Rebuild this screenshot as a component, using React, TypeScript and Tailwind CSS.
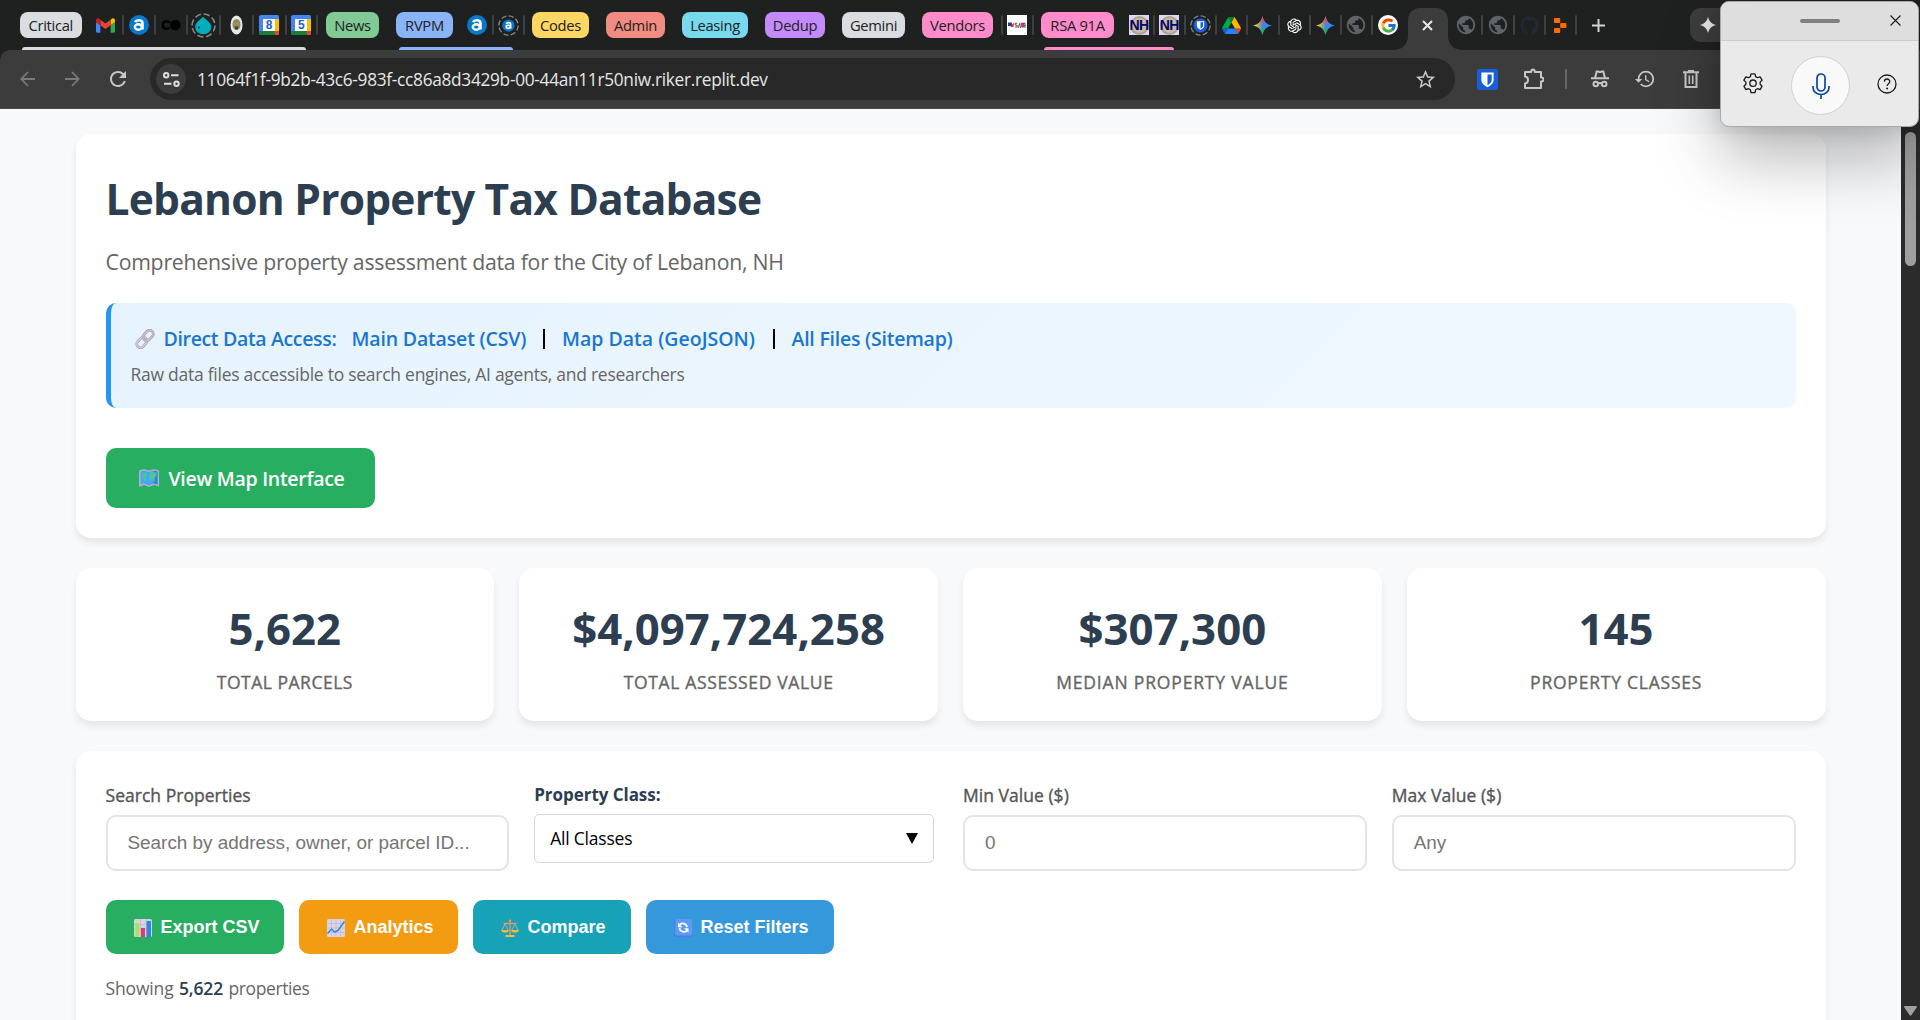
import type { ReactNode } from "react";
import { FaGithub } from "react-icons/fa";
import { FcGoogle } from "react-icons/fc";
import { AiOutlineOpenAI } from "react-icons/ai";
import { MdPublic, MdStarBorder, MdHistory, MdRefresh } from "react-icons/md";

/* ---------- Tab strip ---------- */

function Chip({ className, children }: { className: string; children: ReactNode }) {
  return (
    <div
      className={`flex h-[26px] shrink-0 items-center justify-center rounded-lg text-[14.75px] leading-none tracking-[-0.32px] text-[#202124] ${className}`}
    >
      {children}
    </div>
  );
}

function Slot({ className, children }: { className: string; children: ReactNode }) {
  return <div className={`flex shrink-0 items-center justify-center ${className}`}>{children}</div>;
}

function Sep() {
  return <div className="h-5 w-[2px] shrink-0 rounded-full bg-[#3f4040]" />;
}

function Gmail() {
  return (
    <svg width="19" height="15" viewBox="0 0 24 18">
      <path d="M1.6 18H5.5V8.6L0 4.5v11.9C0 17.3.7 18 1.6 18z" fill="#4285f4" />
      <path d="M18.5 18h3.9c.9 0 1.6-.7 1.6-1.6V4.5l-5.500 4.100z" fill="#34a853" />
      <path d="M18.500 1.600v7L24 4.500V2.500C24 .400 21.600-.800 19.900.500z" fill="#fbbc04" />
      <path d="M5.500 8.600v-7L12 6.500l6.500-4.900v7L12 13.500z" fill="#ea4335" />
      <path d="M0 2.500v2l5.500 4.100v-7L4.100.500C2.400-.800 0 .400 0 2.500z" fill="#c5221f" />
    </svg>
  );
}

function DashedRing({ size, children }: { size: number; children: ReactNode }) {
  return (
    <svg width={size} height={size} viewBox="0 0 24 24">
      <circle cx="12" cy="12" r="11" fill="none" stroke="#85888a" strokeWidth="1.5" strokeDasharray="6 2.600" />
      {children}
    </svg>
  );
}

function LetterA() {
  return (
    <svg width="20" height="20" viewBox="0 0 20 20">
      <circle cx="10" cy="10" r="10" fill="#0679cc" />
      <path d="M6 7.200C7.400 4.600 13.500 4.200 13.500 8.400v6.200" fill="none" stroke="#fff" strokeWidth="2.600" />
      <ellipse cx="9.300" cy="12" rx="3.500" ry="2.700" fill="none" stroke="#fff" strokeWidth="2.400" />
    </svg>
  );
}

function LetterARing() {
  return (
    <DashedRing size={21}>
      <circle cx="12" cy="12" r="7" fill="#0679cc" />
      <path d="M9.400 10C10.400 8.300 14.500 8 14.500 11v4.500" fill="none" stroke="#fff" strokeWidth="1.800" />
      <ellipse cx="11.600" cy="13.400" rx="2.400" ry="1.800" fill="none" stroke="#fff" strokeWidth="1.700" />
    </DashedRing>
  );
}

function CoLogo() {
  return (
    <svg width="20" height="12" viewBox="0 0 20 12">
      <path d="M8.500 3.600A3.800 3.800 0 1 0 8.500 8.400" fill="none" stroke="#000" strokeWidth="2.600" />
      <circle cx="14.300" cy="6" r="5.300" fill="#000" />
    </svg>
  );
}

function Droplet() {
  return (
    <DashedRing size={25}>
      <path d="M11.500 3.500c2.500 2.700 8 5.500 8 10a7.600 6.800 0 0 1-15.500 0c0-4.500 5-7.300 7.500-10z" fill="#00aebd" />
      <circle cx="7.500" cy="14" r="1" fill="#063f4a" />
    </DashedRing>
  );
}

function Seal() {
  return (
    <svg width="13" height="20" viewBox="0 0 13 20">
      <ellipse cx="6.500" cy="10" rx="6" ry="9.500" fill="#e9e9e6" />
      <ellipse cx="6.500" cy="9.500" rx="4" ry="5.500" fill="#7d8b6a" />
      <path d="M3 9c2-3 5-3 7 0l-1 3H4z" fill="#a98a55" />
      <path d="M4.500 11.500h4l-1 3h-2z" fill="#2c4632" />
    </svg>
  );
}

function CalendarIcon({ day }: { day: string }) {
  return (
    <div className="relative h-5 w-5 overflow-hidden rounded-[2px] bg-[#4285f4]">
      <div className="absolute top-[4px] right-0 bottom-0 w-1 bg-[#fbbc04]" />
      <div className="absolute bottom-0 left-0 h-1 w-4 bg-[#188038]" />
      <div className="absolute right-0 bottom-0 h-1 w-1 bg-[#ea4335]" />
      <div className="absolute top-[4px] left-[4px] flex h-3 w-3 items-center justify-center bg-white font-['Liberation_Sans'] text-[12px] leading-none font-bold text-[#1a5fd0]">
        {day}
      </div>
    </div>
  );
}

function NhIcon() {
  return (
    <div className="relative flex h-5 w-5 items-center justify-center overflow-hidden bg-[#dcd8f5]">
      <div className="absolute h-[19px] w-[19px] rounded-full border-2 border-[#b0a394] bg-[#cbbda2]" />
      <span className="relative font-['Liberation_Sans'] text-[14px] leading-none font-bold tracking-[-0.5px] text-[#04046c]">
        NH
      </span>
    </div>
  );
}

function UsaIcon() {
  return (
    <div className="flex h-5 w-5 items-center justify-center bg-white">
      <svg width="18" height="7" viewBox="0 0 18 7">
        <path d="M0 .5h4v3.500H0z" fill="#23408f" />
        <path d="M2.500 4 6 .8 5.500 5H3z" fill="#d4303b" />
        <path d="M9.300 1.200H7.200v1.900h1.900v2H6.800M10.300 6l1.200-4.500L12.700 6" fill="none" stroke="#555" strokeWidth="1" />
        <path d="M12.500.8H18L16 3l2 2.500h-4.500z" fill="#d4303b" />
        <path d="M14 2.500h4v1.500h-4z" fill="#4b74c5" />
      </svg>
    </div>
  );
}

function ShieldPath() {
  return (
    <>
      <path d="M5 4h14v8.500c0 4-4 6.700-7 8.300-3-1.600-7-4.300-7-8.300z" fill="#fff" />
      <path d="M12 6.200h4.800v6.300c0 2.500-2.300 4.500-4.800 6z" fill="#175ddc" />
    </>
  );
}

function BitwardenRing() {
  return (
    <DashedRing size={21}>
      <circle cx="12" cy="12" r="8" fill="#175ddc" />
      <g transform="translate(4.800 4.600) scale(.6)">
        <ShieldPath />
      </g>
    </DashedRing>
  );
}

function Drive() {
  return (
    <svg width="19" height="17" viewBox="0 0 87.3 78">
      <path d="m6.600 66.850 3.850 6.650c.8 1.400 1.950 2.500 3.300 3.300L27.500 53H0c0 1.550.4 3.100 1.200 4.500z" fill="#0066da" />
      <path d="M43.650 25 29.900 1.200c-1.350.8-2.500 1.900-3.300 3.300L1.200 48.500A9.060 9.060 0 0 0 0 53h27.500z" fill="#00ac47" />
      <path d="M73.550 76.800c1.350-.8 2.500-1.900 3.300-3.300l1.600-2.750L86.100 57.500c.8-1.400 1.200-2.950 1.200-4.500H59.800l5.850 11.500z" fill="#ea4335" />
      <path d="M43.650 25 57.400 1.200C56.050.4 54.500 0 52.900 0H34.400c-1.600 0-3.150.45-4.500 1.200z" fill="#00832d" />
      <path d="M59.800 53H27.500L13.750 76.800c1.350.8 2.900 1.200 4.500 1.200h50.800c1.600 0 3.150-.45 4.500-1.200z" fill="#2684fc" />
      <path d="M73.400 26.500 60.700 4.500c-.8-1.400-1.950-2.500-3.300-3.300L43.650 25 59.800 53h27.450c0-1.550-.4-3.100-1.200-4.500z" fill="#ffba00" />
    </svg>
  );
}

const SPARK = "M12 0c1 6.500 5.500 11 12 12-6.500 1-11 5.500-12 12-1-6.500-5.500-11-12-12C6.500 11 11 6.500 12 0z";

function GeminiIcon({ id }: { id: string }) {
  return (
    <svg width="19" height="19" viewBox="0 0 24 24">
      <defs>
        <linearGradient id={`${id}r`} x1="11" y1="0" x2="12.500" y2="11" gradientUnits="userSpaceOnUse">
          <stop offset=".3" stopColor="#f0483c" />
          <stop offset="1" stopColor="#f0483c" stopOpacity="0" />
        </linearGradient>
        <linearGradient id={`${id}y`} x1="2" y1="12" x2="12" y2="12.500" gradientUnits="userSpaceOnUse">
          <stop offset=".2" stopColor="#f9bd14" />
          <stop offset="1" stopColor="#f9bd14" stopOpacity="0" />
        </linearGradient>
        <linearGradient id={`${id}g`} x1="11" y1="22" x2="12.500" y2="12.500" gradientUnits="userSpaceOnUse">
          <stop offset=".2" stopColor="#17b557" />
          <stop offset="1" stopColor="#17b557" stopOpacity="0" />
        </linearGradient>
      </defs>
      <path d={SPARK} fill="#3a86fb" />
      <path d={SPARK} fill={`url(#${id}r)`} />
      <path d={SPARK} fill={`url(#${id}g)`} />
      <path d={SPARK} fill={`url(#${id}y)`} />
    </svg>
  );
}

function Globe() {
  return <MdPublic className="h-[22px] w-[22px] text-[#5f6368]" />;
}

function Replit() {
  return (
    <svg width="13" height="15" viewBox="0 0 13 15">
      <rect x="0" y="0" width="6.200" height="5" rx=".8" fill="#ff6a00" />
      <rect x="6.200" y="5" width="6.200" height="5" rx=".8" fill="#ff6a00" />
      <rect x="0" y="10" width="6.200" height="5" rx=".8" fill="#ff6a00" />
    </svg>
  );
}

function TabStrip() {
  return (
    <div className="relative flex h-[50px] shrink-0 items-center bg-[#1f2120]">
      <Chip className="ml-5 w-[61.5px] bg-[#dadce0]">Critical</Chip>
      <Slot className="ml-[8.500px] w-[31.500px]"><Gmail /></Slot>
      <Sep />
      <Slot className="w-[30.5px]"><LetterA /></Slot>
      <Sep />
      <Slot className="w-[30px]"><CoLogo /></Slot>
      <Sep />
      <Slot className="w-[31px]"><Droplet /></Slot>
      <Sep />
      <Slot className="w-[30.5px]"><Seal /></Slot>
      <Sep />
      <Slot className="w-[31px]"><CalendarIcon day="8" /></Slot>
      <Sep />
      <Slot className="w-[29.5px]"><CalendarIcon day="5" /></Slot>
      <Sep />
      <Chip className="ml-2 w-[53px] bg-[#81c995]">News</Chip>
      <Chip className="ml-[17px] w-[57px] bg-[#8ab4f8]">RVPM</Chip>
      <Slot className="ml-[10px] w-[28.5px]"><LetterA /></Slot>
      <Sep />
      <Slot className="w-[29.5px]"><LetterARing /></Slot>
      <Sep />
      <Chip className="ml-[7px] w-[57px] bg-[#fdd663]">Codes</Chip>
      <Chip className="ml-[17px] w-[59px] bg-[#f28b82]">Admin</Chip>
      <Chip className="ml-[17px] w-[66px] bg-[#78d9ec]">Leasing</Chip>
      <Chip className="ml-[17px] w-[60px] bg-[#c58af9]">Dedup</Chip>
      <Chip className="ml-[17px] w-[63px] bg-[#dadce0]">Gemini</Chip>
      <Chip className="ml-[17px] w-[71px] bg-[#ff8bcb]">Vendors</Chip>
      <div className="w-[7.5px] shrink-0" />
      <Sep />
      <Slot className="w-[29px]"><UsaIcon /></Slot>
      <Sep />
      <Chip className="ml-[7.5px] w-[73px] bg-[#ff8bcb]">RSA 91A</Chip>
      <Slot className="ml-[11px] w-[28px]"><NhIcon /></Slot>
      <Sep />
      <Slot className="w-[28.500px]"><NhIcon /></Slot>
      <Sep />
      <Slot className="w-[29px]"><BitwardenRing /></Slot>
      <Sep />
      <Slot className="w-[29px]"><Drive /></Slot>
      <Sep />
      <Slot className="w-[30px]"><GeminiIcon id="g1" /></Slot>
      <Sep />
      <Slot className="w-[29px]"><AiOutlineOpenAI className="h-[19px] w-[19px] text-white" /></Slot>
      <Sep />
      <Slot className="w-[29px]"><GeminiIcon id="g2" /></Slot>
      <Sep />
      <Slot className="w-[29px]"><Globe /></Slot>
      <Sep />
      <Slot className="w-[31.5px]">
        <div className="flex h-5 w-5 items-center justify-center rounded-full bg-white">
          <FcGoogle className="h-[17px] w-[17px]" />
        </div>
      </Slot>

      <div className="relative mt-2 ml-[3.500px] flex h-[42px] w-10 shrink-0 items-start justify-center rounded-t-[12px] bg-[#3c3c3c] pt-3">
        <svg width="11" height="11" viewBox="0 0 11 11">
          <path d="M1 1l9 9M10 1l-9 9" stroke="#e8e8e8" strokeWidth="2" />
        </svg>
        <svg className="absolute bottom-0 -left-[14px]" width="14" height="14" viewBox="0 0 14 14">
          <path d="M14 0v14H0c8 0 14-6 14-14z" fill="#3c3c3c" />
        </svg>
        <svg className="absolute -right-[14px] bottom-0" width="14" height="14" viewBox="0 0 14 14">
          <path d="M0 0v14h14C6 14 0 8 0 0z" fill="#3c3c3c" />
        </svg>
      </div>

      <Slot className="ml-1 w-[29.5px]"><Globe /></Slot>
      <Sep />
      <Slot className="w-[30px]"><Globe /></Slot>
      <Sep />
      <Slot className="w-[29px]"><FaGithub className="h-[19px] w-[19px] text-[#24292f]" /></Slot>
      <Sep />
      <Slot className="w-[29px]"><Replit /></Slot>
      <Sep />
      <Slot className="ml-[14px] w-[14px]">
        <svg width="13" height="13" viewBox="0 0 13 13">
          <path d="M6.500 0v13M0 6.500h13" stroke="#d2d3d2" strokeWidth="2" />
        </svg>
      </Slot>
      <div className="ml-[85px] flex h-[34px] w-[42px] shrink-0 items-center rounded-[11px] bg-[#3c3c3c] pl-[10px]">
        <svg width="16" height="16" viewBox="0 0 24 24">
          <path d="M12 0c1.500 6.500 5.500 10.500 12 12-6.500 1.500-10.500 5.500-12 12-1.500-6.500-5.500-10.500-12-12C6.500 10.500 10.500 6.500 12 0z" fill="#e3e3e3" />
        </svg>
      </div>

      <div className="absolute bottom-0 left-[22px] h-[3px] w-[284px] rounded-t bg-[#dadce0]" />
      <div className="absolute bottom-0 left-[399px] h-[3px] w-[114px] rounded-t bg-[#8ab4f8]" />
      <div className="absolute bottom-0 left-[1044px] h-[3px] w-[130px] rounded-t bg-[#ff8bcb]" />
    </div>
  );
}

/* ---------- Toolbar ---------- */

function Toolbar() {
  return (
    <div className="bg-[#1f2120]">
      <div className="flex h-[59px] items-center rounded-tl-[10px] border-b border-[#484848] bg-[#3c3c3c] text-[#c7c7c7]">
        <svg className="ml-5 shrink-0" width="15" height="16" viewBox="0 0 15 16">
          <path d="M15 8H1.500M8 1 1.300 8 8 15" fill="none" stroke="#797979" strokeWidth="1.800" />
        </svg>
        <svg className="ml-[30px] shrink-0" width="15" height="16" viewBox="0 0 15 16">
          <path d="M0 8h13.500M7 1l6.700 7L7 15" fill="none" stroke="#797979" strokeWidth="1.800" />
        </svg>
        <MdRefresh className="ml-[25.500px] h-6 w-6 shrink-0" />
        <div className="ml-[20.500px] flex h-[42px] w-[1305px] shrink-0 items-center rounded-full bg-[#282828] pr-[18px] pl-1.5">
          <div className="flex h-[30px] w-[30px] items-center justify-center rounded-full bg-[#3c3c3c]">
            <svg width="17" height="15" viewBox="0 0 17 15">
              <g fill="none" stroke="#dedede" strokeWidth="2">
                <circle cx="3.200" cy="3.200" r="2.200" />
                <path d="M8 3.200h7.500M1 11.800h7.500" />
                <circle cx="13.500" cy="11.800" r="2.200" />
              </g>
            </svg>
          </div>
          <span className="ml-[11px] pt-[2px] text-[17.25px] tracking-[-0.290px] text-[#e6e6e6]">
            11064f1f-9b2b-43c6-983f-cc86a8d3429b-00-44an11r50niw.riker.replit.dev
          </span>
          <MdStarBorder className="ml-auto h-[23px] w-[23px]" />
        </div>
        <svg className="ml-[22px] shrink-0" width="21" height="21" viewBox="0 0 24 24">
          <rect width="24" height="24" rx="3" fill="#175ddc" />
          <ShieldPath />
        </svg>
        <svg className="ml-[24.500px] shrink-0" width="21" height="22" viewBox="0 0 21 22">
          <path
            d="M2 4h6.200c0-3.500 3.600-3.500 3.600 0H18v5.500c3.500 0 3.500 4 0 4V20H2v-4.500c4-.5 4-6.500 0-7z"
            fill="none"
            stroke="#c7c7c7"
            strokeWidth="2"
            strokeLinejoin="round"
          />
        </svg>
        <div className="ml-[21.500px] h-5 w-[2px] shrink-0 rounded-full bg-[#666]" />
        <svg className="ml-6 shrink-0" width="18" height="18" viewBox="0 0 18 18">
          <g fill="none" stroke="#c7c7c7" strokeWidth="2">
            <path d="M0 8.300h18M4 8 5.700 1.600h1.800q1.500.8 3 0h1.800L14 8" />
            <circle cx="4.800" cy="14" r="2.300" />
            <circle cx="13.200" cy="14" r="2.300" />
            <path d="M7 13.500q2-1 4 0" />
          </g>
        </svg>
        <MdHistory className="ml-[25px] h-[22px] w-[22px] shrink-0" />
        <svg className="ml-[27px] shrink-0" width="16" height="18" viewBox="0 0 16 18">
          <g fill="none" stroke="#c7c7c7" strokeWidth="2">
            <path d="M0 2.200h16M5 1h6M2.500 2.500V17h11V2.500" />
            <path d="M6.300 5.500v8.500M9.700 5.500v8.500" strokeWidth="1.600" />
          </g>
        </svg>
      </div>
    </div>
  );
}

/* ---------- Voice typing panel ---------- */

function VoicePanel() {
  return (
    <div className="absolute top-px right-px h-[126px] w-[199px] rounded-[9px] border border-[#a9a9a9] bg-[#e9eae9] shadow-[0_32px_64px_rgba(0,0,0,0.28),0_2px_20px_rgba(0,0,0,0.12)]">
      <div className="relative flex h-[39px] items-center justify-center rounded-t-[8px] border-b border-[#cbcccb] bg-[#dddedd]">
        <div className="h-1 w-10 rounded-full bg-[#808080]" />
        <svg className="absolute top-[13px] right-[17.500px]" width="11" height="11" viewBox="0 0 11 11">
          <path d="M.5.500l10 10M10.500.500l-10 10" stroke="#1b1b1b" strokeWidth="1.100" />
        </svg>
      </div>
      <div className="flex h-[85px] items-center justify-between pr-[21px] pl-[22px]">
        <svg width="20" height="21" viewBox="0 0 20 21">
          <g fill="none" stroke="#1b1b1b" strokeWidth="1.300" strokeLinejoin="round">
            <path d="M8 .9h4l.6 2.700 1.900 1.100 2.600-.9 2 3.400-2 1.900v2.200l2 1.900-2 3.400-2.600-.9-1.900 1.100-.6 2.900H8l-.6-2.900-1.900-1.100-2.600.9-2-3.400 2-1.900V9.100l-2-1.900 2-3.400 2.600.9 1.900-1.100z" />
            <circle cx="10" cy="10.200" r="3.200" />
          </g>
        </svg>
        <div className="mt-[4px] ml-[1px] flex h-[59px] w-[59px] items-center justify-center rounded-full border border-[#d0d0d0] bg-[#f9f9f9]">
          <svg width="18" height="26" viewBox="0 0 18 26">
            <g fill="none" stroke="#0c489f" strokeWidth="1.700">
              <rect x="5" y="1" width="8" height="17" rx="4" />
              <path d="M1 13v1.500a8 7 0 0 0 16 0V13M9 21.500V26" />
            </g>
          </svg>
        </div>
        <svg width="20" height="20" viewBox="0 0 20 20">
          <g fill="none" stroke="#1b1b1b" strokeWidth="1.300">
            <circle cx="10" cy="10" r="9" />
            <path d="M7.400 7.700c0-3.600 5.400-3.500 5.400-.2 0 2.200-2.700 2.200-2.700 4.600" />
          </g>
          <circle cx="10.100" cy="14.400" r="1" fill="#1b1b1b" />
        </svg>
      </div>
    </div>
  );
}

/* ---------- Page glyphs ---------- */

function LinkGlyph() {
  return (
    <svg width="20" height="20" viewBox="0 0 20 20">
      <g fill="none" transform="rotate(-48 10 10)">
        <rect x="-.5" y="6.300" width="11.500" height="7.400" rx="3.700" stroke="#a79caa" strokeWidth="2.700" />
        <rect x="-.5" y="6.300" width="11.500" height="7.400" rx="3.700" stroke="#d5cbd8" strokeWidth="1.500" />
        <rect x="9" y="6.300" width="11.500" height="7.400" rx="3.700" stroke="#a79caa" strokeWidth="2.700" />
        <rect x="9" y="6.300" width="11.500" height="7.400" rx="3.700" stroke="#cbbfce" strokeWidth="1.500" />
      </g>
    </svg>
  );
}

function MapGlyph() {
  return (
    <svg width="20" height="19" viewBox="0 0 20 19">
      <path d="M0 1.500 5 0l5 1.500L15 0l5 1.500v16L15 16l-5 2-5-2-5 2z" fill="#b6b0c8" />
      <path d="M1.500 2.600 5 1.500l5 1.500 5-1.500 3.500 1.100v13L15 14.500l-5 2-5-2-3.500 1.100z" fill="#46a5fa" />
      <path d="M14.800 1.500l3.700 1.100v13L14.800 14.500z" fill="#2f7fd8" />
      <path d="M3 4l5 .5-.5 2.500-2 1.500L7.500 10 6.500 14l-1.500-3-1.500-3zM10.500 4.500l3-1.500 4 .5-.5 4-1.500 1 .5 3-1 1.500-1-3.500-2 .5.500 3-1.500-.5-.5-3z" fill="#4cc88f" />
    </svg>
  );
}

function BarsGlyph() {
  return (
    <svg width="18" height="18" viewBox="0 0 18 18">
      <rect width="18" height="18" rx="1.500" fill="#d9d2e3" />
      <path d="M0 5.500h18M0 10h18M6.500 0v18M12.500 0v18" stroke="#bfb6cc" strokeWidth=".7" />
      <rect x="1.300" y="4" width="3.900" height="14" fill="#a5e364" />
      <rect x="7" y="9" width="4" height="9" fill="#e23a72" />
      <rect x="12.500" y="2" width="4.500" height="16" fill="#3187dc" />
    </svg>
  );
}

function TrendGlyph() {
  return (
    <svg width="18" height="18" viewBox="0 0 18 18">
      <rect width="18" height="18" rx="1.500" fill="#dad3e5" />
      <path d="M0 4.500h18M0 9h18M0 13.500h18M4.500 0v18M9 0v18M13.500 0v18" stroke="#c1b8cf" strokeWidth=".7" />
      <path d="M.5 14.500 4.500 10l3 3 3.500-1.500L17.500 2.500" fill="none" stroke="#2d86d9" strokeWidth="1.500" />
    </svg>
  );
}

function ScalesGlyph() {
  return (
    <svg width="18" height="18" viewBox="0 0 18 18">
      <path d="M9 1v15" stroke="#c98f79" strokeWidth="1.800" />
      <path d="M2.500 4.500h13" stroke="#e0a07a" strokeWidth="1.300" />
      <path d="M4 5 1 11M4 5l3.200 6M14 5l-3.200 6M14 5l3 6" stroke="#d9b18c" strokeWidth=".8" />
      <path d="M0 11h8c-.5 3.500-7.500 3.500-8 0zM10 11h8c-.5 3.500-7.500 3.500-8 0zM4.500 16h9v2h-9z" fill="#f9b83e" />
      <circle cx="9" cy="1.800" r="1.300" fill="#e9a04a" />
    </svg>
  );
}

function ResetGlyph() {
  return (
    <svg width="18" height="18" viewBox="0 0 18 18">
      <rect width="18" height="18" rx="2" fill="#4a7fe3" />
      <rect x="1.200" y="0" width="16.800" height="16.500" rx="2" fill="#5b9bf5" />
      <path d="M5.200 6.200C7.500 3.300 12.500 4 13 8.200M13.300 11.200C11 14 6 13 5.500 9" fill="none" stroke="#fff" strokeWidth="1.800" />
      <path d="M4 3.500V8.200H8.500zM14.500 13.800V9.200H10z" fill="#fff" />
    </svg>
  );
}

/* ---------- Page ---------- */

const CARD = "shrink-0 rounded-[15px] bg-white shadow-[0_5px_7.5px_rgba(0,0,0,0.08)]";

function HeaderCard() {
  return (
    <div className={`h-[404px] px-[30px] pt-[37px] ${CARD}`}>
      <h1 className="h-[56px] text-[42.5px] leading-[56px] font-bold tracking-[-0.770px] text-[#2c3e50]">
        Lebanon Property Tax Database
      </h1>
      <p className="mt-[20px] h-[30px] text-[21.250px] leading-[30px] tracking-[-0.240px] text-[#666]">
        Comprehensive property assessment data for the City of Lebanon, NH
      </p>
      <div className="mt-[26px] h-[105px] rounded-[10px] border-l-[5px] border-[#2196f3] bg-linear-135 from-[#e6f3fd] to-[#f0f8ff] pt-[22px] pl-5">
        <div className="flex h-7 items-center text-[19.500px] font-semibold text-[#1976d2]">
          <span className="ml-1"><LinkGlyph /></span>
          <span className="ml-[9px] w-[188px] tracking-[-0.340px]">Direct Data Access:</span>
          <span className="w-[191.500px] tracking-[-0.170px]">Main Dataset (CSV)</span>
          <span className="h-5 w-[2px] bg-black" />
          <span className="ml-[17px] w-[211px]">Map Data (GeoJSON)</span>
          <span className="h-5 w-[2px] bg-black" />
          <span className="ml-[16.500px] tracking-[-0.230px]">All Files (Sitemap)</span>
        </div>
        <div className="mt-[9px] h-6 text-[17.500px] leading-6 tracking-[-0.260px] text-[#666]">
          Raw data files accessible to search engines, AI agents, and researchers
        </div>
      </div>
      <div className="mt-10 flex h-[60px] w-[269px] items-center rounded-[10px] bg-[#27ae60] pt-px pl-[33px] text-[19.500px] font-semibold tracking-[-0.290px] text-white">
        <MapGlyph />
        <span className="ml-[10px] pt-px">View Map Interface</span>
      </div>
    </div>
  );
}

function Stat({ value, label, track }: { value: string; label: string; track: string }) {
  return (
    <div className={`flex h-[153px] flex-col items-center pt-[32px] ${CARD}`}>
      <div className="h-[56px] text-[43.750px] leading-[56px] font-bold text-[#2c3e50]">{value}</div>
      <div className={`mt-[14px] h-6 text-[17.500px] leading-6 text-[#666] [-webkit-text-stroke:0.35px_#666] ${track}`}>
        {label}
      </div>
    </div>
  );
}

function Field({ label, hint }: { label: string; hint: string }) {
  return (
    <div>
      <div className="h-6 text-[17.500px] leading-6 tracking-[0.030px] text-[#555] [-webkit-text-stroke:0.35px_#555]">
        {label}
      </div>
      <div className="mt-[8px] flex h-[56px] items-center rounded-[10px] border-2 border-[#e1e5e9] pl-5 font-['Liberation_Sans'] text-[18.900px] text-[#757575]">
        {hint}
      </div>
    </div>
  );
}

function ActionButton({ className, glyph, children }: { className: string; glyph: ReactNode; children: ReactNode }) {
  return (
    <div className={`flex h-[54px] items-center rounded-[10px] pt-px pl-7 font-['Liberation_Sans'] text-[18px] font-bold text-white ${className}`}>
      {glyph}
      <span className="ml-[9px]">{children}</span>
    </div>
  );
}

function FiltersCard() {
  return (
    <div className={`h-[330px] px-[30px] pt-8 ${CARD}`}>
      <div className="grid grid-cols-4 gap-[25px]">
        <Field label="Search Properties" hint="Search by address, owner, or parcel ID..." />
        <div>
          <div className="h-6 text-[17px] leading-6 font-bold tracking-[-0.050px] text-[#2c3e50]">Property Class:</div>
          <div className="mt-[7px] flex h-[49px] w-[400px] items-center justify-between rounded-[5px] border border-[#d8d8d8] pr-[15px] pl-[15px] text-[17.500px] tracking-[-0.220px] text-black">
            <span>All Classes</span>
            <svg width="12" height="11" viewBox="0 0 12 11">
              <path d="M0 0h12L6 11z" fill="#000" />
            </svg>
          </div>
        </div>
        <Field label="Min Value ($)" hint="0" />
        <Field label="Max Value ($)" hint="Any" />
      </div>
      <div className="mt-[29px] flex gap-[15px]">
        <ActionButton className="w-[178px] bg-[#27ae60]" glyph={<BarsGlyph />}>Export CSV</ActionButton>
        <ActionButton className="w-[159px] bg-[#f39c12]" glyph={<TrendGlyph />}>Analytics</ActionButton>
        <ActionButton className="w-[158px] bg-[#17a2b8]" glyph={<ScalesGlyph />}>Compare</ActionButton>
        <ActionButton className="w-[188px] bg-[#3498db]" glyph={<ResetGlyph />}>Reset Filters</ActionButton>
      </div>
      <div className="mt-[22px] flex h-6 items-center text-[17.500px] tracking-[-0.150px] text-[#666]">
        <span className="w-[73.500px]">Showing</span>
        <span className="w-[49.500px] font-semibold text-[#2c3e50]">5,622</span>
        <span className="tracking-[-0.400px]">properties</span>
      </div>
    </div>
  );
}

export default function App() {
  return (
    <div className="relative flex h-[1020px] w-[1920px] flex-col overflow-hidden bg-[#1f2120] font-['Open_Sans',sans-serif]">
      <TabStrip />
      <Toolbar />
      <div className="flex h-[911px]">
        <main className="flex w-[1901px] flex-col overflow-hidden bg-[#f8f9fb] px-[75.500px] pt-[25px]">
          <HeaderCard />
          <div className="mt-[30px] grid shrink-0 grid-cols-4 gap-[25px]">
            <Stat value="5,622" label="TOTAL PARCELS" track="tracking-[0.500px]" />
            <Stat value="$4,097,724,258" label="TOTAL ASSESSED VALUE" track="tracking-[0.650px]" />
            <Stat value="$307,300" label="MEDIAN PROPERTY VALUE" track="tracking-[0.830px]" />
            <Stat value="145" label="PROPERTY CLASSES" track="tracking-[0.770px]" />
          </div>
          <div className="h-[30px] shrink-0" />
          <FiltersCard />
        </main>
        <div className="flex w-[19px] flex-col items-center justify-between bg-[#2b2b2b] pt-[23px] pb-1">
          <div className="h-[134px] w-[11px] rounded-full bg-[#9f9f9f]" />
          <svg width="13" height="10" viewBox="0 0 13 10">
            <path d="M1 0h11q1.500 0 .7 1.500L7.500 9q-1 1.500-2 0L.3 1.500Q-.5 0 1 0z" fill="#9f9f9f" />
          </svg>
        </div>
      </div>
      <VoicePanel />
    </div>
  );
}
